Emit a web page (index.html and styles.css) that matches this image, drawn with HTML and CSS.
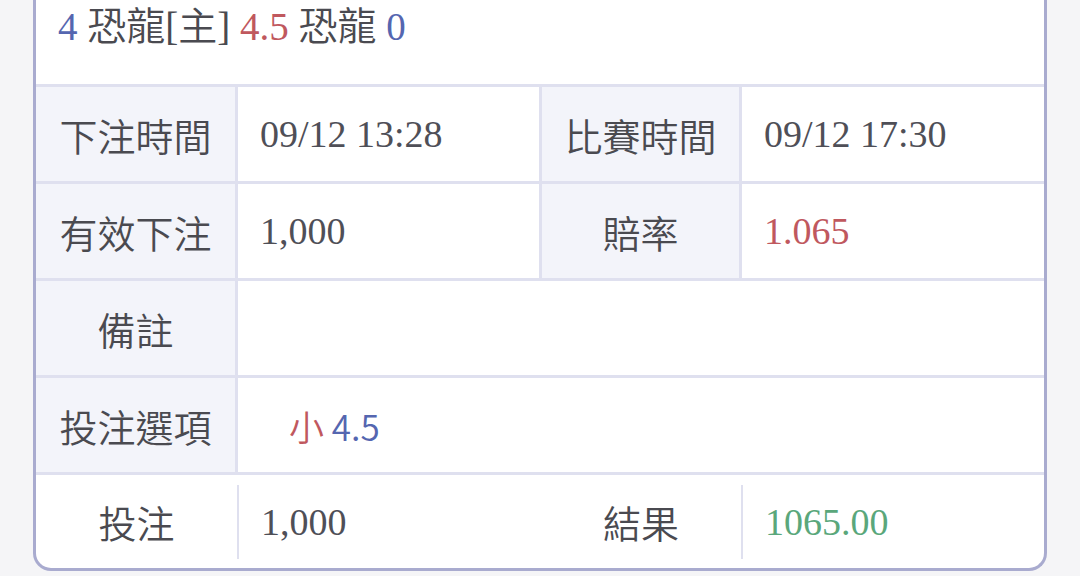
FILE: index.html
```html
<!DOCTYPE html>
<html lang="zh-Hant">
<head>
<meta charset="utf-8">
<link rel="stylesheet" href="styles.css">
</head>
<body>
<div class="card">
  <div class="header"><span class="blue">4</span> 恐龍[主] <span class="red">4.5</span> 恐龍 <span class="blue">0</span></div>
  <div class="grid">
    <div class="label">下注時間</div>
    <div class="value">09/12 13:28</div>
    <div class="label">比賽時間</div>
    <div class="value">09/12 17:30</div>

    <div class="label">有效下注</div>
    <div class="value">1,000</div>
    <div class="label">賠率</div>
    <div class="value red">1.065</div>

    <div class="label">備註</div>
    <div class="value wide"></div>

    <div class="label">投注選項</div>
    <div class="value wide"><span class="pick"><span class="red">小</span> <span class="blue">4.5</span></span></div>
  </div>
  <div class="footer">
    <div class="flabel">投注</div>
    <div class="fvalue sep">1,000</div>
    <div class="flabel">結果</div>
    <div class="fvalue sep green">1065.00</div>
  </div>
</div>
</body>
</html>
```
FILE: styles.css
```css
html, body {
  margin: 0;
  padding: 0;
  background: #f5f5f7;
}
body {
  width: 1080px;
  height: 576px;
  overflow: hidden;
}
.card {
  margin-left: 33px;
  width: 1008px;
  background: #ffffff;
  border: 3px solid #a9abcf;
  border-top: none;
  border-radius: 0 0 18px 18px;
  overflow: hidden;
}
.header {
  height: 84px;
  padding-left: 22px;
  font-family: "Liberation Serif", "Noto Sans CJK TC", serif;
  font-weight: 350;
  font-size: 39px;
  line-height: 54px;
  color: #4a4a50;
}
.blue { color: #5566b0; }
.red { color: #c0585e; }
.green { color: #5aa77b; }
.grid {
  display: grid;
  grid-template-columns: 199px 301px 197px 1fr;
  grid-auto-rows: 94px;
  gap: 3px;
  background: #dfe0ef;
  border-top: 3px solid #dfe0ef;
  border-bottom: 3px solid #dfe0ef;
}
.label {
  background: #f3f4fa;
  display: flex;
  align-items: center;
  justify-content: center;
  font-family: "Noto Sans CJK TC", sans-serif;
  font-weight: 350;
  font-size: 38px;
  color: #4a4a50;
}
.value {
  background: #ffffff;
  display: flex;
  align-items: center;
  padding-left: 22px;
  font-family: "Liberation Serif", "Noto Sans CJK TC", serif;
  font-size: 38px;
  color: #4f4f57;
}
.value.red { color: #c0585e; }
.wide {
  grid-column: 2 / 5;
}
.pick {
  margin-left: 29px;
  font-family: "Noto Sans CJK TC", sans-serif;
  font-weight: 350;
  font-size: 35px;
  white-space: pre;
}
.footer {
  display: grid;
  grid-template-columns: 201px 304px 200px 1fr;
  height: 93px;
  align-items: center;
}
.flabel {
  display: flex;
  align-items: center;
  justify-content: center;
  height: 100%;
  font-family: "Noto Sans CJK TC", sans-serif;
  font-weight: 350;
  font-size: 38px;
  color: #4a4a50;
}
.fvalue {
  height: 74px;
  display: flex;
  align-items: center;
  padding-left: 22px;
  font-family: "Liberation Serif", serif;
  font-size: 38px;
  color: #4f4f57;
}
.fvalue.green { color: #5aa77b; }
.sep {
  border-left: 2px solid #dfe0ef;
}
```
